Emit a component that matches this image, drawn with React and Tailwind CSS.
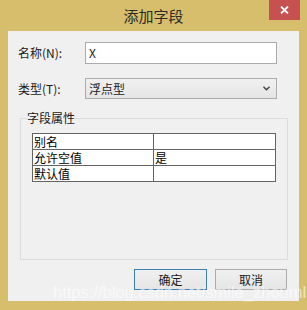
import React from "react";

const font = { fontFamily: '"Noto Sans CJK SC", "Noto Sans", sans-serif' };

export default function App() {
  return (
    <div
      className="relative w-[307px] h-[310px] bg-[#d6be6c] flex flex-col overflow-hidden"
      style={font}
    >
      {/* Title bar */}
      <div className="h-[31px] grid grid-cols-[1fr_auto_1fr] items-start">
        <div />
        <div className="text-[15px] leading-[20px] mt-[6px] text-[#2b2b2b]">添加字段</div>
        <div className="flex justify-end pr-[7px]">
          <div className="w-[31px] h-[20px] bg-[#c75050] flex items-center justify-center">
            <svg width="9" height="8" viewBox="0 0 9 8">
              <path d="M1 0.5 L8 7.5 M8 0.5 L1 7.5" stroke="#ffffff" strokeWidth="1.8" />
            </svg>
          </div>
        </div>
      </div>

      {/* Client area */}
      <div className="mx-[8px] h-[270px] bg-[#f0f0f0] flex flex-col pt-[11px] text-[12px] text-[#1a1a1a]">
        <div className="flex items-center h-[22px]">
          <div className="w-[77px] pl-[10px] leading-[16px]">名称(N):</div>
          <div className="w-[192px] h-[22px] bg-white border border-[#ababab] flex items-center pl-[3px] leading-[16px]">
            X
          </div>
        </div>

        <div className="flex items-center h-[21px] mt-[14px]">
          <div className="w-[77px] pl-[10px] leading-[16px]">类型(T):</div>
          <div className="w-[192px] h-[21px] border border-[#acacac] bg-gradient-to-b from-[#f0f0f0] to-[#e5e5e5] flex items-center justify-between pl-[3px] pr-[6px] leading-[16px]">
            <span>浮点型</span>
            <svg width="7" height="5" viewBox="0 0 7 5">
              <path d="M0.5 0.8 L3.5 3.8 L6.5 0.8" stroke="#404040" strokeWidth="1.4" fill="none" />
            </svg>
          </div>
        </div>

        <fieldset className="ml-[12px] mt-[11px] w-[268px] h-[150px] border border-[#dcdcdc] pl-[6px]">
          <legend className="leading-[16px] px-0">字段属性</legend>
          <table className="ml-[5px] mt-[7px] w-[244px] border-collapse bg-white leading-[15px] text-black">
            <tbody>
              <tr className="h-[16px]">
                <td className="w-[121px] border border-[#646464] px-[1px] py-0">别名</td>
                <td className="border border-[#646464] px-[1px] py-0"></td>
              </tr>
              <tr className="h-[16px]">
                <td className="border border-[#646464] px-[1px] py-0">允许空值</td>
                <td className="border border-[#646464] px-[1px] py-0">是</td>
              </tr>
              <tr className="h-[16px]">
                <td className="border border-[#646464] px-[1px] py-0">默认值</td>
                <td className="border border-[#646464] px-[1px] py-0"></td>
              </tr>
            </tbody>
          </table>
        </fieldset>

        <div className="flex mt-[9px] pl-[126px] gap-[8px]">
          <div className="w-[73px] h-[21px] border border-[#3c7fb1] bg-gradient-to-b from-[#f0f0f0] to-[#e5e5e5] flex items-center justify-center leading-[16px]">
            确定
          </div>
          <div className="w-[72px] h-[21px] border border-[#acacac] bg-gradient-to-b from-[#f0f0f0] to-[#e5e5e5] flex items-center justify-center leading-[16px]">
            取消
          </div>
        </div>
      </div>

      {/* Watermark overlay */}
      <div
        className="absolute left-[53px] top-[283px] text-[16.5px] leading-[18px] text-white/60 whitespace-nowrap"
        style={{ fontFamily: '"Liberation Sans", Arial, sans-serif' }}
      >
        https://blog.csdn.net/smile_zhouml
      </div>
    </div>
  );
}
